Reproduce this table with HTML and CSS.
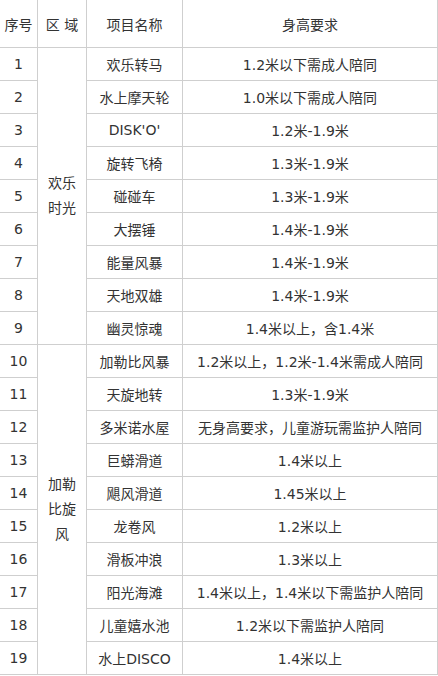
FILE: index.html
```html
<!DOCTYPE html>
<html lang="zh-CN">
<head>
<meta charset="utf-8">
<title>项目身高要求</title>
<link rel="stylesheet" href="styles.css">
</head>
<body>
<div class="sheet">
  <div class="cell head">序号</div>
  <div class="cell head">区 域</div>
  <div class="cell head">项目名称</div>
  <div class="cell head">身高要求</div>

  <div class="cell">1</div>
  <div class="cell zone zone-a">欢乐时光</div>
  <div class="cell">欢乐转马</div>
  <div class="cell">1.2米以下需成人陪同</div>

  <div class="cell">2</div>
  <div class="cell">水上摩天轮</div>
  <div class="cell">1.0米以下需成人陪同</div>

  <div class="cell">3</div>
  <div class="cell">DISK'O'</div>
  <div class="cell">1.2米-1.9米</div>

  <div class="cell">4</div>
  <div class="cell">旋转飞椅</div>
  <div class="cell">1.3米-1.9米</div>

  <div class="cell">5</div>
  <div class="cell">碰碰车</div>
  <div class="cell">1.3米-1.9米</div>

  <div class="cell">6</div>
  <div class="cell">大摆锤</div>
  <div class="cell">1.4米-1.9米</div>

  <div class="cell">7</div>
  <div class="cell">能量风暴</div>
  <div class="cell">1.4米-1.9米</div>

  <div class="cell">8</div>
  <div class="cell">天地双雄</div>
  <div class="cell">1.4米-1.9米</div>

  <div class="cell">9</div>
  <div class="cell">幽灵惊魂</div>
  <div class="cell">1.4米以上，含1.4米</div>

  <div class="cell">10</div>
  <div class="cell zone zone-b">加勒比旋风</div>
  <div class="cell">加勒比风暴</div>
  <div class="cell">1.2米以上，1.2米-1.4米需成人陪同</div>

  <div class="cell">11</div>
  <div class="cell">天旋地转</div>
  <div class="cell">1.3米-1.9米</div>

  <div class="cell">12</div>
  <div class="cell">多米诺水屋</div>
  <div class="cell">无身高要求，儿童游玩需监护人陪同</div>

  <div class="cell">13</div>
  <div class="cell">巨蟒滑道</div>
  <div class="cell">1.4米以上</div>

  <div class="cell">14</div>
  <div class="cell">飓风滑道</div>
  <div class="cell">1.45米以上</div>

  <div class="cell">15</div>
  <div class="cell">龙卷风</div>
  <div class="cell">1.2米以上</div>

  <div class="cell">16</div>
  <div class="cell">滑板冲浪</div>
  <div class="cell">1.3米以上</div>

  <div class="cell">17</div>
  <div class="cell">阳光海滩</div>
  <div class="cell">1.4米以上，1.4米以下需监护人陪同</div>

  <div class="cell">18</div>
  <div class="cell">儿童嬉水池</div>
  <div class="cell">1.2米以下需监护人陪同</div>

  <div class="cell">19</div>
  <div class="cell">水上DISCO</div>
  <div class="cell">1.4米以上</div>
</div>
</body>
</html>
```

FILE: styles.css
```css
html, body {
  margin: 0;
  padding: 0;
  background: #fff;
}

body {
  font-family: "DejaVu Sans", "Noto Sans CJK SC", sans-serif;
  font-size: 14px;
  color: #333;
}

.sheet {
  display: grid;
  grid-template-columns: 37px 48px 95px 254px;
  grid-template-rows: 47px repeat(19, 32px);
  gap: 1px;
  padding: 1px;
  margin: -1px 0 0 -1px;
  width: max-content;
  background: #cfcfcf;
}

.cell {
  background: #fff;
  display: flex;
  align-items: center;
  justify-content: center;
  text-align: center;
  white-space: nowrap;
}

.zone {
  grid-column: 2;
  white-space: normal;
  padding: 0 8px;
  line-height: 25px;
}

.zone-a {
  grid-row: 2 / span 9;
}

.zone-b {
  grid-row: 11 / span 10;
}
```
